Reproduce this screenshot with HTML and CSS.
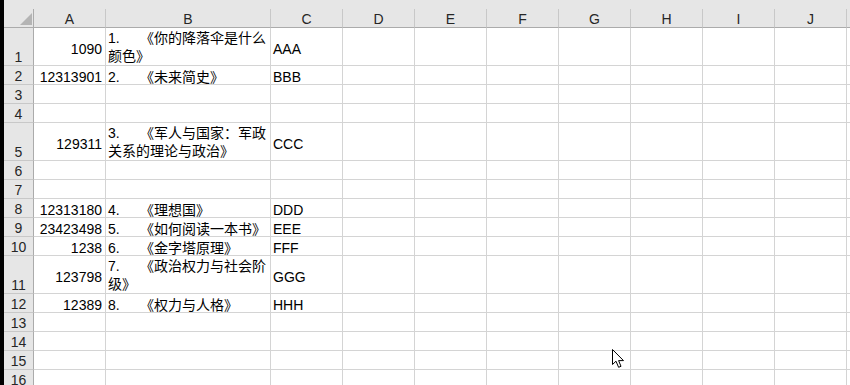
FILE: index.html
```html
<!DOCTYPE html>
<html>
<head>
<meta charset="utf-8">
<meta name="viewport" content="width=device-width, initial-scale=1">
<title>工作簿1 - Sheet1</title>
<link rel="stylesheet" href="styles.css">
</head>
<body>

<div class="win">
<div class="edge"></div>

<div class="sheet">
  <div class="band"></div>

  <div class="row head">
    <div class="rh corner"><svg width="12" height="12" viewBox="0 0 12 12"><polygon points="12,0 12,12 0,12" fill="#b4b4b4"/></svg></div>
    <div class="ch">A</div><div class="ch">B</div><div class="ch">C</div><div class="ch">D</div><div class="ch">E</div><div class="ch">F</div><div class="ch">G</div><div class="ch">H</div><div class="ch">I</div><div class="ch">J</div><div class="ch"></div>
  </div>

  <div class="row tall">
    <div class="rh">1</div>
    <div class="c num">1090</div>
    <div class="c txt"><p><span class="no">1.</span>《你的降落伞是什么<br>颜色》</p></div>
    <div class="c">AAA</div>
    <div class="c"></div><div class="c"></div><div class="c"></div><div class="c"></div><div class="c"></div><div class="c"></div><div class="c"></div><div class="c"></div>
  </div>

  <div class="row">
    <div class="rh">2</div>
    <div class="c num">12313901</div>
    <div class="c txt"><p><span class="no">2.</span>《未来简史》</p></div>
    <div class="c">BBB</div>
    <div class="c"></div><div class="c"></div><div class="c"></div><div class="c"></div><div class="c"></div><div class="c"></div><div class="c"></div><div class="c"></div>
  </div>

  <div class="row">
    <div class="rh">3</div>
    <div class="c"></div><div class="c"></div><div class="c"></div><div class="c"></div><div class="c"></div><div class="c"></div><div class="c"></div><div class="c"></div><div class="c"></div><div class="c"></div><div class="c"></div>
  </div>

  <div class="row">
    <div class="rh">4</div>
    <div class="c"></div><div class="c"></div><div class="c"></div><div class="c"></div><div class="c"></div><div class="c"></div><div class="c"></div><div class="c"></div><div class="c"></div><div class="c"></div><div class="c"></div>
  </div>

  <div class="row tall">
    <div class="rh">5</div>
    <div class="c num">129311</div>
    <div class="c txt"><p><span class="no">3.</span>《军人与国家：军政<br>关系的理论与政治》</p></div>
    <div class="c">CCC</div>
    <div class="c"></div><div class="c"></div><div class="c"></div><div class="c"></div><div class="c"></div><div class="c"></div><div class="c"></div><div class="c"></div>
  </div>

  <div class="row">
    <div class="rh">6</div>
    <div class="c"></div><div class="c"></div><div class="c"></div><div class="c"></div><div class="c"></div><div class="c"></div><div class="c"></div><div class="c"></div><div class="c"></div><div class="c"></div><div class="c"></div>
  </div>

  <div class="row">
    <div class="rh">7</div>
    <div class="c"></div><div class="c"></div><div class="c"></div><div class="c"></div><div class="c"></div><div class="c"></div><div class="c"></div><div class="c"></div><div class="c"></div><div class="c"></div><div class="c"></div>
  </div>

  <div class="row">
    <div class="rh">8</div>
    <div class="c num">12313180</div>
    <div class="c txt"><p><span class="no">4.</span>《理想国》</p></div>
    <div class="c">DDD</div>
    <div class="c"></div><div class="c"></div><div class="c"></div><div class="c"></div><div class="c"></div><div class="c"></div><div class="c"></div><div class="c"></div>
  </div>

  <div class="row">
    <div class="rh">9</div>
    <div class="c num">23423498</div>
    <div class="c txt"><p><span class="no">5.</span>《如何阅读一本书》</p></div>
    <div class="c">EEE</div>
    <div class="c"></div><div class="c"></div><div class="c"></div><div class="c"></div><div class="c"></div><div class="c"></div><div class="c"></div><div class="c"></div>
  </div>

  <div class="row">
    <div class="rh">10</div>
    <div class="c num">1238</div>
    <div class="c txt"><p><span class="no">6.</span>《金字塔原理》</p></div>
    <div class="c">FFF</div>
    <div class="c"></div><div class="c"></div><div class="c"></div><div class="c"></div><div class="c"></div><div class="c"></div><div class="c"></div><div class="c"></div>
  </div>

  <div class="row tall">
    <div class="rh">11</div>
    <div class="c num">123798</div>
    <div class="c txt"><p><span class="no">7.</span>《政治权力与社会阶<br>级》</p></div>
    <div class="c">GGG</div>
    <div class="c"></div><div class="c"></div><div class="c"></div><div class="c"></div><div class="c"></div><div class="c"></div><div class="c"></div><div class="c"></div>
  </div>

  <div class="row">
    <div class="rh">12</div>
    <div class="c num">12389</div>
    <div class="c txt"><p><span class="no">8.</span>《权力与人格》</p></div>
    <div class="c">HHH</div>
    <div class="c"></div><div class="c"></div><div class="c"></div><div class="c"></div><div class="c"></div><div class="c"></div><div class="c"></div><div class="c"></div>
  </div>

  <div class="row">
    <div class="rh">13</div>
    <div class="c"></div><div class="c"></div><div class="c"></div><div class="c"></div><div class="c"></div><div class="c"></div><div class="c"></div><div class="c"></div><div class="c"></div><div class="c"></div><div class="c"></div>
  </div>

  <div class="row">
    <div class="rh">14</div>
    <div class="c"></div><div class="c"></div><div class="c"></div><div class="c"></div><div class="c"></div><div class="c"></div><div class="c"></div><div class="c"></div><div class="c"></div><div class="c"></div><div class="c"></div>
  </div>

  <div class="row">
    <div class="rh">15</div>
    <div class="c"></div><div class="c"></div><div class="c"></div><div class="c"></div><div class="c"></div><div class="c"></div><div class="c"></div><div class="c"></div><div class="c"></div><div class="c"></div><div class="c"></div>
  </div>

  <div class="row">
    <div class="rh">16</div>
    <div class="c"></div><div class="c"></div><div class="c"></div><div class="c"></div><div class="c"></div><div class="c"></div><div class="c"></div><div class="c"></div><div class="c"></div><div class="c"></div><div class="c"></div>
  </div>
</div>

<!-- mouse pointer over the grid -->
<svg class="pointer" width="13" height="20" viewBox="0 0 13 20"><path d="M0.5 0.5 L0.5 15.5 L4 12.2 L6.6 18.3 L9 17.3 L6.6 11.6 L11.5 11.6 Z" fill="#fff" stroke="#000" stroke-width="1" stroke-linejoin="miter"/></svg>
</div>

</body>
</html>
```

FILE: styles.css
```css
* { box-sizing:border-box; }
html, body { margin:0; padding:0; }
body { width:850px; height:385px; overflow:hidden; background:#fff; font-family:"Liberation Sans", "Noto Sans CJK SC", sans-serif; font-size:14px; color:#000; }

.win { display:flex; height:385px; position:relative; }
.edge { flex:none; width:4px; background:#000; }
.sheet { flex:1; overflow:hidden; }
.band { height:9px; background:#e6e6e6; }

.row { display:grid; grid-template-columns:30px 72px 165px repeat(9, 72px); grid-template-rows:19px; }
.row.tall { grid-template-rows:38px; }

/* headers */
.rh { display:flex; align-items:flex-end; justify-content:center; background:#e6e6e6; color:#262626; line-height:16px; border-right:1px solid #ababab; border-bottom:1px solid #c8c8c8; }
.ch { display:flex; align-items:center; justify-content:center; padding-top:2px; background:#e6e6e6; color:#262626; line-height:18px; border-right:1px solid #c8c8c8; border-bottom:1px solid #ababab; }
.head .rh { border-bottom:1px solid #ababab; justify-content:flex-end; padding:0 1px 2px 0; }
.corner svg { display:block; }

/* cells */
.c { display:flex; align-items:center; min-height:0; padding:4px 2px 0; line-height:18px; white-space:nowrap; border-right:1px solid #d4d4d4; border-bottom:1px solid #d4d4d4; }
.c.num { justify-content:flex-end; padding-right:3px; }
.c.txt { padding-left:2px; }
.tall .c.txt { padding-top:0; }
.c p { margin:0; }
.no { display:inline-block; width:32px; }

.pointer { position:absolute; left:612px; top:349px; }
```
